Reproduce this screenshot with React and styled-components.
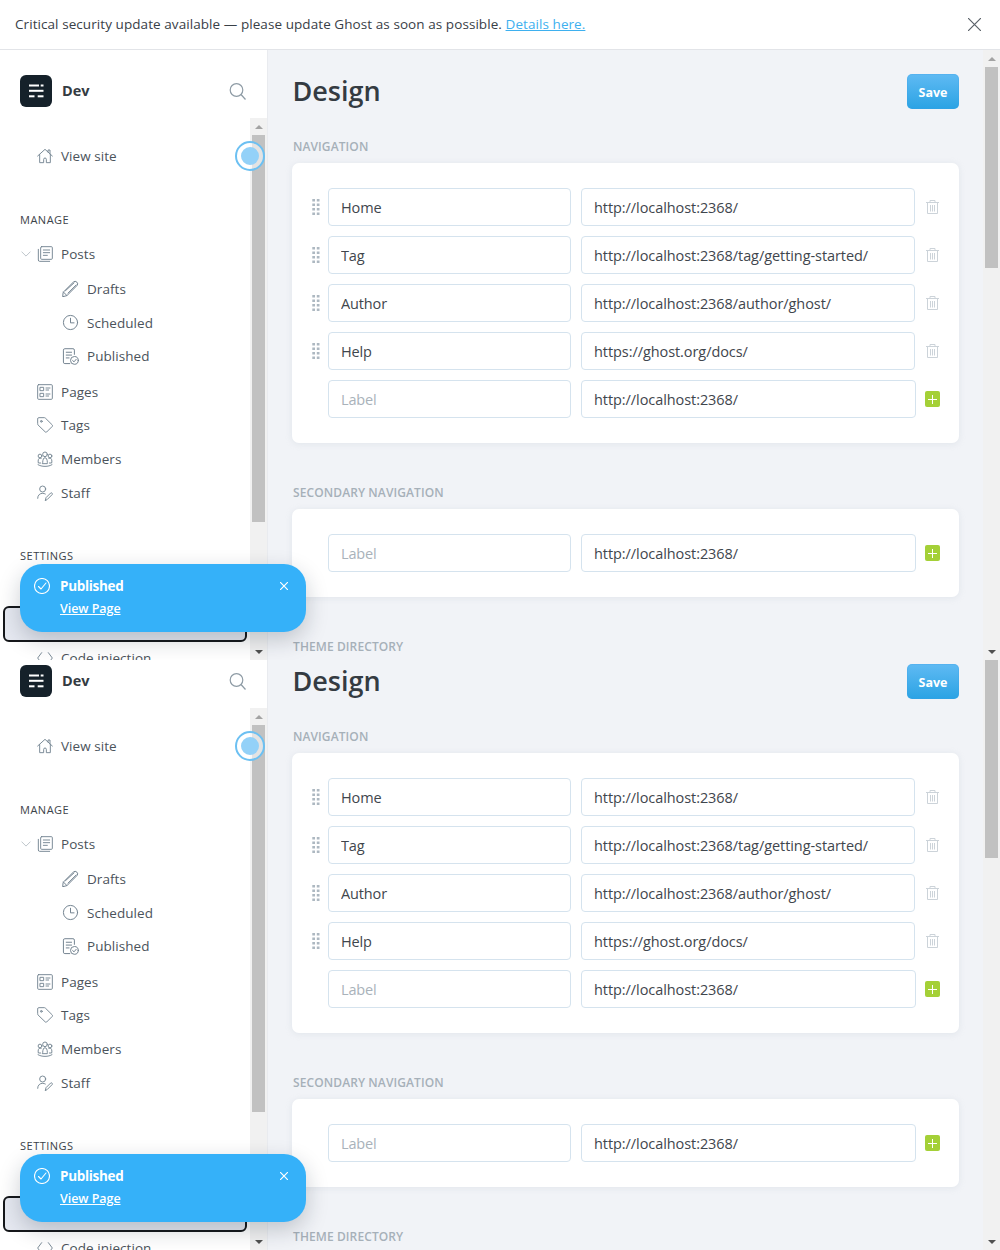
import React from "react";
import styled, { createGlobalStyle } from "styled-components";

const Global = createGlobalStyle`
  html, body { margin: 0; padding: 0; height: 1250px; overflow: hidden; background: #fff; }
  body { font-family: "Open Sans", "Noto Sans", sans-serif; color: #394047; }
  * { box-sizing: border-box; }
`;

const Banner = styled.div`
  height: 50px; display: flex; align-items: center; justify-content: space-between;
  padding: 0 19px 1px 15px; background: #fff; border-bottom: 1px solid #e2e4e8;
  font-size: 13.5px; letter-spacing: 0.07px; color: #394047; position: relative; z-index: 2;
`;
const BannerLink = styled.a`color: #3eb0ef; text-decoration: underline;`;

const Panel = styled.section`
  position: relative; height: 610px; display: flex; overflow: hidden;
  background: #f1f3f7; z-index: ${p => (p.$under ? 0 : 1)};
  margin-top: ${p => (p.$under ? "-20px" : "0")};
`;

const Sidebar = styled.aside`
  width: 268px; flex: none; background: #fff; border-right: 1px solid #e9ebef;
  display: flex; flex-direction: column;
`;
const SideHead = styled.div`
  height: 68px; flex: none; padding: 25px 21px 0 20px; display: flex; align-items: flex-start; gap: 10px;
`;
const Logo = styled.svg`width: 32px; height: 32px; flex: none;`;
const SiteName = styled.div`font-size: 14.5px; font-weight: 700; line-height: 32px; flex: 1; color: #343b42;`;
const SearchBtn = styled.svg`
  width: 17px; height: 17px; margin-top: 8px; fill: none; stroke: #8e9ba5; stroke-width: 1.2;
`;
const SideBody = styled.div`flex: 1; min-height: 0; display: flex;`;
const NavScroll = styled.nav`flex: 1; min-width: 0; overflow: hidden; padding-top: 21px;`;

const NavHeading = styled.div`
  font-size: 11px; font-weight: 500; line-height: 14px; letter-spacing: 0.5px; text-transform: uppercase;
  color: #3c434a; padding-left: 20px; margin: 40px 0 10.6px;
`;
const NavItem = styled.div`
  height: 33.6px; display: flex; align-items: center; gap: 8px; font-size: 13.5px; letter-spacing: 0.05px; color: #4b535b;
  padding-left: ${p => (p.$sub ? "62px" : "37px")};
`;
const SubList = styled.div`margin: 1.4px 0 2px;`;
const NavGroupEnd = styled.div`margin-bottom: -0.6px;`;
const NavIcon = styled.svg`
  width: ${p => (p.$sub ? "17px" : "16px")}; height: ${p => (p.$sub ? "17px" : "16px")}; flex: none;
  fill: none; stroke: #728390; stroke-width: 1.4; stroke-linecap: round; stroke-linejoin: round;
`;
const Chevron = styled.svg`
  width: 10px; height: 10px; flex: none; margin-left: -16px; margin-right: -2px;
  fill: none; stroke: #a9b3ba; stroke-width: 1.8; stroke-linecap: round; stroke-linejoin: round;
`;
const FocusItem = styled.div`
  height: 36px; width: 244px; margin: 43px 0 -1px 3px; border: 2px solid #15171a; border-radius: 6px;
  background: #e6e9f1;
`;

const Track = styled.div`
  width: 17px; flex: none; background: #f1f1f1; display: flex; flex-direction: column;
`;
const ArrowBtn = styled.div`
  height: 17px; flex: none; display: flex; align-items: center; justify-content: center;
`;
const ArrowUp = styled.div`
  width: 0; height: 0; border-left: 4px solid transparent; border-right: 4px solid transparent;
  border-bottom: 4px solid #a3a3a3;
`;
const ArrowDown = styled.div`
  width: 0; height: 0; border-left: 4px solid transparent; border-right: 4px solid transparent;
  border-top: 4px solid #505050;
`;
const Thumb = styled.div`
  flex: none; margin: 0 2px; background: #c1c1c1;
`;
const TrackGap = styled.div`flex: 1;`;

const Main = styled.main`flex: 1; min-width: 0; padding: 24px 24px 0; overflow: hidden;`;
const MainHead = styled.header`
  height: 35px; display: flex; align-items: center; justify-content: space-between;
`;
const Title = styled.h1`
  margin: 0 0 2px 0.5px; font-size: 27px; font-weight: 600; line-height: 33px; letter-spacing: 0; color: #343b42;
`;
const SaveBtn = styled.button`
  width: 52px; height: 35px; border: 0; border-radius: 5px; padding: 1px 0 0;
  background: linear-gradient(#5fbaf3, #2ba3e4); color: #fff;
  font: 700 12.5px "Open Sans", sans-serif; box-shadow: 0 0 0 1px rgba(60,160,230,.25) inset;
`;
const SectionLabel = styled.h2`
  margin: ${p => (p.$first ? "31px" : "43px")} 0 9px 1px; font-size: 12px; line-height: 14px;
  font-weight: 600; letter-spacing: 0.1px; text-transform: uppercase; color: #a6b0b9;
`;
const Card = styled.div`
  background: #fff; border-radius: 7px; padding: 25px 19px 25px 20px;
  box-shadow: 0 1px 6px rgba(190,198,210,.3); display: flex; flex-direction: column; gap: 10px;
`;
const Row = styled.div`display: flex; align-items: center; height: 38px;`;
const GripSlot = styled.div`width: 16px; flex: none; display: flex;`;
const Grip = styled.svg`width: 8px; height: 16px; fill: #adb8c1;`;
const Field = styled.input`
  height: 38px; min-width: 0; border: 1px solid #d5e3ee; border-radius: 4px; background: #fff;
  padding: 0 12.5px 0 12px; font: 400 14.5px "Open Sans", sans-serif; letter-spacing: ${p => (p.$grow ? "-0.07px" : "-0.13px")}; color: #3f464d; outline: 0;
  flex: ${p => (p.$grow ? "1" : "none")}; width: ${p => (p.$grow ? "auto" : "243px")};
  margin-right: ${p => (p.$grow ? "0" : "10px")};
  &::placeholder { color: #a9b2ba; opacity: 1; }
`;
const ActionSlot = styled.div`
  flex: none; width: ${p => (p.$add ? "24px" : "25px")}; padding-left: ${p => (p.$add ? "9px" : "10.5px")};
  display: flex;
`;
const Trash = styled.svg`
  width: 13px; height: 14px; fill: none; stroke: #ccd3d9; stroke-width: 1;
`;
const AddBtn = styled.div`
  width: 15px; height: 16px; border-radius: 2px; background: #a4d037; display: flex; align-items: center; justify-content: center;
`;
const AddIcon = styled.svg`width: 9px; height: 9px; stroke: #fff; stroke-width: 1; fill: none;`;

const Toast = styled.div`
  position: absolute; left: 20px; top: 514px; width: 286px; height: 68px; border-radius: 22px;
  background: #35b1f9; color: #fff; padding: 12px 18px 0 14px; display: flex; gap: 10px;
  box-shadow: 0 8px 22px rgba(20,30,50,.22); z-index: 3;
`;
const ToastCheck = styled.svg`
  width: 16px; height: 16px; flex: none; margin-top: 2px; fill: none; stroke: #fff; stroke-width: 1.1;
  stroke-linecap: round; stroke-linejoin: round;
`;
const ToastBody = styled.div`flex: 1; min-width: 0;`;
const ToastTitle = styled.div`font-size: 13.5px; font-weight: 700; line-height: 20px; letter-spacing: -0.32px;`;
const ToastLink = styled.a`
  display: block; font-size: 12.5px; font-weight: 600; line-height: 18px; margin-top: 4px; color: #fff; text-decoration: underline;
  letter-spacing: -0.05px;
`;
const ToastClose = styled.svg`
  width: 8px; height: 8px; flex: none; margin-top: 6px; stroke: #fff; stroke-width: 1.2; fill: none;
`;
const CloseIcon = styled.svg`width: 13px; height: 13px; stroke: #5a6168; stroke-width: 1.2; fill: none;`;

const Pulse = styled.div`
  position: absolute; left: 235px; top: 91px; width: 30px; height: 30px; border-radius: 50%;
  border: 2px solid #6cc0f2; background: rgba(255,255,255,.55); display: flex; align-items: center; justify-content: center; z-index: 2;
`;
const PulseDot = styled.div`width: 18px; height: 18px; border-radius: 50%; background: #93d1f8;`;

const icons = {
  home: <><path d="M1 12 12 2l11 10" /><path d="M16.5 6V3h3v6" /><path d="M4 10v12h6v-5a2 2 0 0 1 4 0v5h6V10" /></>,
  posts: <><rect x="5.5" y="1" width="17.5" height="19" rx="1.5" /><path d="M2 5v16a2 2 0 0 0 2 2h15" /><path d="M9.5 6h9.5M9.5 10h9.5M9.5 14h6" /></>,
  pencil: <><path d="M2 17 16 3a3 3 0 0 1 5 5L7 22l-5.5 1.5z" /><path d="M2 17l5 5M5 15 17 4M8.5 18.5 20 7" /></>,
  clock: <><circle cx="12" cy="12" r="10" /><path d="M12 6v6.500h5" /></>,
  published: <><path d="M17.500 9V3a2 2 0 0 0-2-2H4a2 2 0 0 0-2 2v17a2 2 0 0 0 2 2h7" /><path d="M6 6h7.500M6 10h7.500M6 14h4" /><circle cx="17.500" cy="17.500" r="5.500" /><path d="m15 17.700 2 1.800 3-3.500" /></>,
  pages: <><rect x="1" y="1" width="22" height="22" rx="1.500" /><rect x="5" y="5" width="5" height="5" /><rect x="5" y="14" width="5" height="5" /><path d="M13.500 6h6M13.500 9h4M13.500 15h6M13.500 18h4" /></>,
  tag: <><path d="M1 2.500A1.500 1.500 0 0 1 2.500 1h8.500a2 2 0 0 1 1.500.6L23 12a1.500 1.500 0 0 1 0 2l-8.500 8.500a1.500 1.500 0 0 1-2 0L1.600 12a2 2 0 0 1-.6-1.500z" /><circle cx="6.500" cy="6.500" r="1.300" /></>,
  members: <><circle cx="12" cy="5" r="3.500" /><path d="M8.500 17c0-4 1.500-7 3.500-7s3.500 3 3.500 7v2h-7z" /><circle cx="4.500" cy="7.500" r="2.800" /><path d="M5.500 18H2c-1-4 .5-7.500 2.500-7.500 1 0 1.600.4 2 1" /><circle cx="19.500" cy="7.500" r="2.800" /><path d="M18.500 18H22c1-4-.5-7.500-2.500-7.500-1 0-1.600.4-2 1" /><path d="M1.500 20.500c5 3.500 16 3.500 21 0" /></>,
  staff: <><circle cx="8.500" cy="6" r="4.500" /><path d="M1 20c0-5 3.500-7.500 7.500-7.500 1.500 0 3 .4 4 1" /><path d="m12.500 23 1-4 7-7c1.200-1.200 3.500 1 2.300 2.300l-7 7z" /></>,
  code: <><path d="M7 4 1 12l6 8M17 4l6 8-6 8" /></>,
};

const Icon = ({ name, sub }) => <NavIcon viewBox="0 0 24 24" $sub={sub}>{icons[name]}</NavIcon>;

const Scrollbar = ({ thumb }) => (
  <Track>
    <ArrowBtn><ArrowUp /></ArrowBtn>
    <Thumb style={{ height: thumb }} />
    <TrackGap />
    <ArrowBtn><ArrowDown /></ArrowBtn>
  </Track>
);

const GripIcon = () => (
  <Grip viewBox="0 0 8 16">
    {[0.3, 4.8].map(x => [0, 4.5, 9, 13.5].map(y => <rect key={`${x}${y}`} x={x} y={y} width="2.7" height="2.5" />))}
  </Grip>
);

const TrashIcon = () => (
  <Trash viewBox="0 0 13 14">
    <path d="M0 2.500h13M4 2.500V.5h5v2M1.500 2.500v11h10v-11M4.500 5v6.500M6.500 5v6.500M8.500 5v6.500" />
  </Trash>
);

const NavRow = ({ label, value }) => (
  <Row>
    <GripSlot><GripIcon /></GripSlot>
    <Field readOnly value={label} />
    <Field $grow readOnly value={value} />
    <ActionSlot><TrashIcon /></ActionSlot>
  </Row>
);

const AddRow = () => (
  <Row>
    <GripSlot />
    <Field readOnly placeholder="Label" />
    <Field $grow readOnly value="http://localhost:2368/" />
    <ActionSlot $add>
      <AddBtn><AddIcon viewBox="0 0 9 9"><path d="M4.500 0v9M0 4.500h9" /></AddIcon></AddBtn>
    </ActionSlot>
  </Row>
);

const links = [
  ["Home", "http://localhost:2368/"],
  ["Tag", "http://localhost:2368/tag/getting-started/"],
  ["Author", "http://localhost:2368/author/ghost/"],
  ["Help", "https://ghost.org/docs/"],
];

const DesignPanel = ({ under }) => (
  <Panel $under={under}>
    <Sidebar>
      <SideHead>
        <Logo viewBox="0 0 32 32">
          <rect width="32" height="32" rx="6" fill="#15212a" />
          <g fill="#fff">
            <rect x="9" y="9.500" width="10" height="2" /><rect x="20.700" y="9.500" width="2.800" height="2" />
            <rect x="9" y="14.800" width="14.500" height="2" />
            <rect x="9" y="20.300" width="5.500" height="2" /><rect x="17.700" y="20.300" width="5.800" height="2" />
          </g>
        </Logo>
        <SiteName>Dev</SiteName>
        <SearchBtn viewBox="0 0 17 17"><circle cx="7.500" cy="7" r="6.300" /><path d="m12 11.500 4.500 5" /></SearchBtn>
      </SideHead>
      <SideBody>
        <NavScroll>
          <NavItem><Icon name="home" />View site</NavItem>
          <NavHeading>Manage</NavHeading>
          <NavItem>
            <Chevron viewBox="0 0 24 24"><path d="m2 7 10 10L22 7" /></Chevron>
            <Icon name="posts" />Posts
          </NavItem>
          <SubList>
            <NavItem $sub><Icon sub name="pencil" />Drafts</NavItem>
            <NavItem $sub><Icon sub name="clock" />Scheduled</NavItem>
            <NavItem $sub><Icon sub name="published" />Published</NavItem>
          </SubList>
          <NavItem><Icon name="pages" />Pages</NavItem>
          <NavItem><Icon name="tag" />Tags</NavItem>
          <NavItem><Icon name="members" />Members</NavItem>
          <NavGroupEnd><NavItem><Icon name="staff" />Staff</NavItem></NavGroupEnd>
          <NavHeading>Settings</NavHeading>
          <FocusItem />
          <NavItem><Icon name="code" />Code injection</NavItem>
        </NavScroll>
        <Scrollbar thumb={387} />
      </SideBody>
    </Sidebar>
    <Main>
      <MainHead>
        <Title>Design</Title>
        <SaveBtn>Save</SaveBtn>
      </MainHead>
      <SectionLabel $first>Navigation</SectionLabel>
      <Card>
        {links.map(([l, v]) => <NavRow key={l} label={l} value={v} />)}
        <AddRow />
      </Card>
      <SectionLabel>Secondary Navigation</SectionLabel>
      <Card><AddRow /></Card>
      <SectionLabel>Theme Directory</SectionLabel>
    </Main>
    <Scrollbar thumb={201} />
    <Pulse><PulseDot /></Pulse>
    <Toast>
      <ToastCheck viewBox="0 0 16 16"><circle cx="8" cy="8" r="7.500" /><path d="m4.500 8.500 2.500 2.500 5-6" /></ToastCheck>
      <ToastBody>
        <ToastTitle>Published</ToastTitle>
        <ToastLink>View Page</ToastLink>
      </ToastBody>
      <ToastClose viewBox="0 0 8 8"><path d="m0 0 8 8M8 0 0 8" /></ToastClose>
    </Toast>
  </Panel>
);

export default function App() {
  return (
    <>
      <Global />
      <Banner>
        <span>Critical security update available — please update Ghost as soon as possible. <BannerLink>Details here.</BannerLink></span>
        <CloseIcon viewBox="0 0 13 13"><path d="m0 0 13 13M13 0 0 13" /></CloseIcon>
      </Banner>
      <DesignPanel />
      <DesignPanel under />
    </>
  );
}
